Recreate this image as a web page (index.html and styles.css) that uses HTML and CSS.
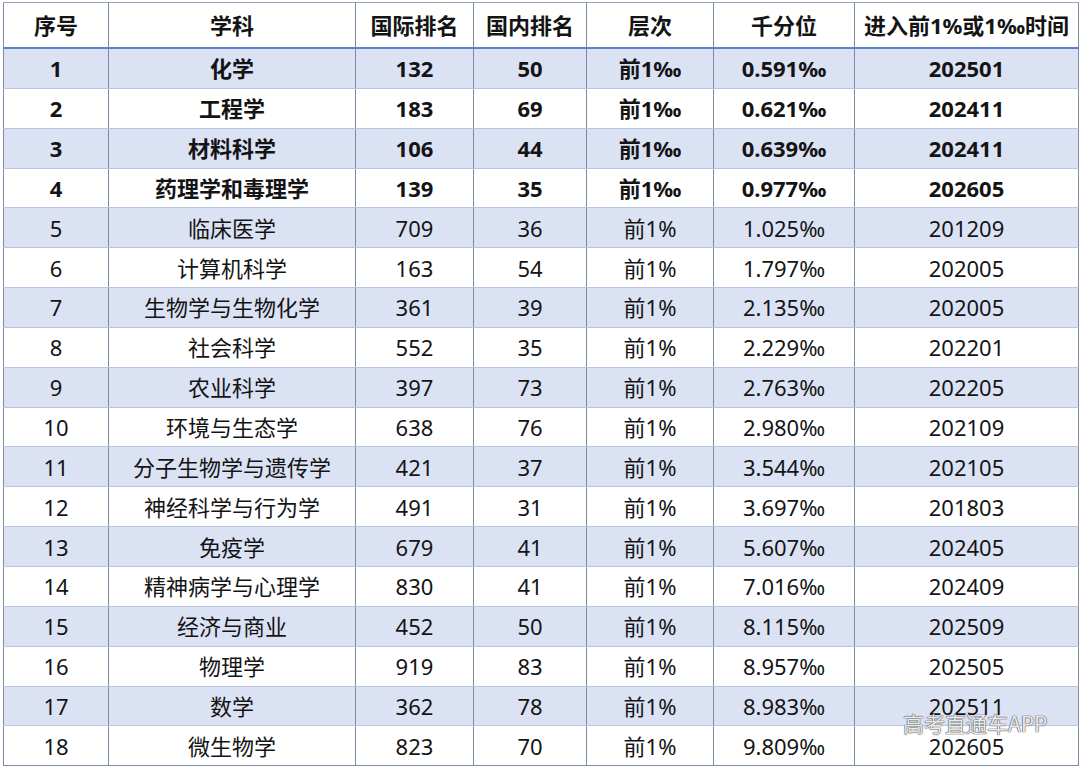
FILE: index.html
```html
<!DOCTYPE html>
<html lang="zh-CN">
<head>
<meta charset="utf-8">
<title>学科排名</title>
<link rel="stylesheet" href="styles.css">
</head>
<body>
<div class="wrap">
<table class="rank">
<colgroup>
<col class="c1"><col class="c2"><col class="c3"><col class="c4"><col class="c5"><col class="c6"><col class="c7">
</colgroup>
<thead>
<tr><th>序号</th><th>学科</th><th>国际排名</th><th>国内排名</th><th>层次</th><th>千分位</th><th>进入前1%或1‰时间</th></tr>
</thead>
<tbody>
<tr class="bold"><td>1</td><td>化学</td><td>132</td><td>50</td><td>前1‰</td><td>0.591‰</td><td>202501</td></tr>
<tr class="bold"><td>2</td><td>工程学</td><td>183</td><td>69</td><td>前1‰</td><td>0.621‰</td><td>202411</td></tr>
<tr class="bold"><td>3</td><td>材料科学</td><td>106</td><td>44</td><td>前1‰</td><td>0.639‰</td><td>202411</td></tr>
<tr class="bold"><td>4</td><td>药理学和毒理学</td><td>139</td><td>35</td><td>前1‰</td><td>0.977‰</td><td>202605</td></tr>
<tr><td>5</td><td>临床医学</td><td>709</td><td>36</td><td>前1%</td><td>1.025‰</td><td>201209</td></tr>
<tr><td>6</td><td>计算机科学</td><td>163</td><td>54</td><td>前1%</td><td>1.797‰</td><td>202005</td></tr>
<tr><td>7</td><td>生物学与生物化学</td><td>361</td><td>39</td><td>前1%</td><td>2.135‰</td><td>202005</td></tr>
<tr><td>8</td><td>社会科学</td><td>552</td><td>35</td><td>前1%</td><td>2.229‰</td><td>202201</td></tr>
<tr><td>9</td><td>农业科学</td><td>397</td><td>73</td><td>前1%</td><td>2.763‰</td><td>202205</td></tr>
<tr><td>10</td><td>环境与生态学</td><td>638</td><td>76</td><td>前1%</td><td>2.980‰</td><td>202109</td></tr>
<tr><td>11</td><td>分子生物学与遗传学</td><td>421</td><td>37</td><td>前1%</td><td>3.544‰</td><td>202105</td></tr>
<tr><td>12</td><td>神经科学与行为学</td><td>491</td><td>31</td><td>前1%</td><td>3.697‰</td><td>201803</td></tr>
<tr><td>13</td><td>免疫学</td><td>679</td><td>41</td><td>前1%</td><td>5.607‰</td><td>202405</td></tr>
<tr><td>14</td><td>精神病学与心理学</td><td>830</td><td>41</td><td>前1%</td><td>7.016‰</td><td>202409</td></tr>
<tr><td>15</td><td>经济与商业</td><td>452</td><td>50</td><td>前1%</td><td>8.115‰</td><td>202509</td></tr>
<tr><td>16</td><td>物理学</td><td>919</td><td>83</td><td>前1%</td><td>8.957‰</td><td>202505</td></tr>
<tr><td>17</td><td>数学</td><td>362</td><td>78</td><td>前1%</td><td>8.983‰</td><td>202511</td></tr>
<tr><td>18</td><td>微生物学</td><td>823</td><td>70</td><td>前1%</td><td>9.809‰</td><td>202605</td></tr>
</tbody>
</table>
<div class="watermark">高考直通车APP</div>
</div>
</body>
</html>
```
FILE: styles.css
```css
html, body {
  margin: 0;
  padding: 0;
  background: #ffffff;
}
.wrap {
  position: relative;
  width: 1080px;
  height: 767px;
  overflow: hidden;
}
.rank {
  margin: 2px 0 0 3px;
  width: 1075px;
  border-collapse: collapse;
  table-layout: fixed;
  font-family: "Noto Sans", "Noto Sans CJK SC", sans-serif;
  font-size: 22px;
  color: #141414;
}
.c1 { width: 105px; }
.c2 { width: 247px; }
.c3 { width: 118px; }
.c4 { width: 113px; }
.c5 { width: 127px; }
.c6 { width: 141px; }
.c7 { width: 224px; }
.rank th, .rank td {
  text-align: center;
  padding: 0;
  border-left: 1px solid #7d8ca3;
  border-right: 1px solid #7d8ca3;
  border-bottom: 1px solid #b7c5e2;
  white-space: nowrap;
  line-height: 1;
}
.rank th {
  height: 44px;
  font-weight: 700;
  font-size: 22px;
  border-top: 1px solid #9aa8bf;
  border-bottom: 2px solid #5b82cc;
}
.rank td {
  height: 38.85px;
}
.rank tbody tr:nth-child(odd) td {
  background: #dbe2f4;
}
.rank tbody tr:last-child td {
  border-bottom: 1px solid #7d8ca3;
}
.rank tr.bold td {
  font-weight: 700;
}
.watermark {
  position: absolute;
  left: 903px;
  top: 711px;
  font-family: "Noto Sans CJK SC", "Noto Sans", sans-serif;
  font-size: 21px;
  color: rgba(255, 255, 255, 0.9);
  text-shadow: 0 0 1px #555, 0 0 1px #555, 0 0 1px #555;
  line-height: 1.2;
}
```
